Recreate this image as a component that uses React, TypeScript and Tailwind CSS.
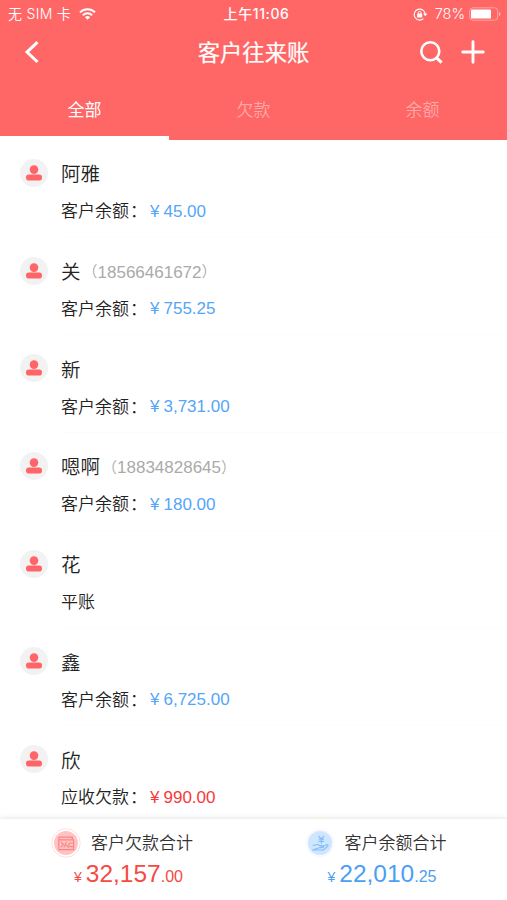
type Customer = {
	name: string;
	phone?: string;
	label: string;
	amount?: string;
	owed?: boolean;
};

const customers: Customer[] = [
	{ name: "阿雅", label: "客户余额", amount: "45.00" },
	{ name: "关", phone: "18566461672", label: "客户余额", amount: "755.25" },
	{ name: "新", label: "客户余额", amount: "3,731.00" },
	{ name: "嗯啊", phone: "18834828645", label: "客户余额", amount: "180.00" },
	{ name: "花", label: "平账" },
	{ name: "鑫", label: "客户余额", amount: "6,725.00" },
	{ name: "欣", label: "应收欠款", amount: "990.00", owed: true },
];

const tabs = ["全部", "欠款", "余额"];

function StatusBar() {
	return (
		<div className="grid h-7 grid-cols-3 items-center pr-1.5 pl-2 text-[14px] leading-5">
			<div className="flex items-center gap-2">
				<span className="whitespace-nowrap font-['Inter','Noto_Sans_CJK_SC',sans-serif] font-[350] tracking-[0.3px]">
					无 SIM 卡
				</span>
				<svg className="h-3 w-[17px]" fill="none" viewBox="0 0 17 12">
					<path d="M1 4.4a10.7 10.7 0 0 1 15 0" stroke="white" strokeWidth="2" />
					<path d="M3.8 7.2a6.7 6.7 0 0 1 9.4 0" stroke="white" strokeWidth="1.9" />
					<path d="M5.9 9.2a3.7 3.7 0 0 1 5.2 0L8.5 11.8Z" fill="white" />
				</svg>
			</div>
			<div className="whitespace-nowrap pl-1 text-center font-['Inter','Noto_Sans_CJK_SC',sans-serif] font-medium text-[14px] tracking-[0.6px]">
				上午11:06
			</div>
			<div className="flex items-center justify-end">
				<svg className="h-[13px] w-[15px]" fill="none" viewBox="0 0 15 13">
					<path
						d="M10.4 10.7A5.5 5.5 0 1 1 12.2 6"
						stroke="white"
						strokeWidth="1.1"
					/>
					<path d="M10.2 5.4h4.2l-2.1 2.8Z" fill="white" />
					<rect fill="white" height="3.8" rx=".5" width="5" x="4.2" y="5.6" />
					<path d="M5.3 6V4.8a1.4 1.4 0 0 1 2.8 0V6" stroke="white" strokeWidth=".9" />
				</svg>
				<span className="ml-[7px] font-['Inter',sans-serif] font-[350] text-[14.5px]">
					78%
				</span>
				<svg className="ml-1 h-[14px] w-8" fill="none" viewBox="0 0 32 14">
					<rect
						height="12.4"
						rx="3.2"
						stroke="white"
						strokeOpacity=".4"
						width="28"
						x=".7"
						y=".8"
					/>
					<rect fill="white" height="9.2" rx="1.2" width="20" x="2" y="2.4" />
					<path d="M30 4.8c2 .8 2 3.6 0 4.4Z" fill="white" fillOpacity=".5" />
				</svg>
			</div>
		</div>
	);
}

function Header() {
	return (
		<header className="h-[140px] bg-[#ff6666] text-white">
			<StatusBar />
			<div className="grid h-12 grid-cols-3 items-center">
				<svg className="ml-6 h-6 w-4" fill="none" viewBox="0 0 16 24">
					<path d="M13.5 2.2 3 12.1l10.5 9.9" stroke="white" strokeWidth="3" />
				</svg>
				<h1 className="whitespace-nowrap pt-[3px] text-center font-normal text-[22.3px] leading-8 [-webkit-text-stroke:0.2px_white]">
					客户往来账
				</h1>
				<div className="flex items-center justify-end gap-[18px] pr-[22px]">
					<svg className="h-6 w-6" fill="none" viewBox="0 0 24 24">
						<circle cx="11.3" cy="11.2" r="9" stroke="white" strokeWidth="2.6" />
						<path d="m17.4 17.6 5.2 5" stroke="white" strokeWidth="3" />
					</svg>
					<svg className="h-6 w-6" fill="none" viewBox="0 0 24 24">
						<path
							d="M12 1.8v20.4M1.8 12h20.4"
							stroke="white"
							strokeLinecap="round"
							strokeWidth="2.9"
						/>
					</svg>
				</div>
			</div>
			<nav className="grid h-16 grid-cols-3 text-[17px]">
				{tabs.map((tab, i) => (
					<div
						className={
							i === 0
								? "border-white border-b-4 pt-[23px] text-center leading-6"
								: "pt-[23px] text-center font-[350] text-white/45 leading-6"
						}
						key={tab}
					>
						{tab}
					</div>
				))}
			</nav>
		</header>
	);
}

function Avatar() {
	return (
		<svg className="h-7 w-7 shrink-0" viewBox="0 0 28 28">
			<circle cx="14" cy="14" fill="#f2f2f2" r="14" />
			<circle cx="14" cy="10.6" fill="#ff6468" r="4.3" />
			<rect fill="#ff6468" height="6" rx="2.8" width="16" x="6" y="15.6" />
		</svg>
	);
}

function CustomerRow({ name, phone, label, amount, owed }: Customer) {
	return (
		<li className="flex h-[97.7px] shrink-0 pl-5">
			<div className="pt-[19px]">
				<Avatar />
			</div>
			<div className="ml-[13px] flex-1 border-[#fcfcfc] border-b pt-5">
				<div className="flex h-[30px] items-center whitespace-nowrap">
					<span className="font-[350] text-[#222] text-[19.5px]">{name}</span>
					{phone && (
						<span className="flex items-center pl-0.5 font-[350] text-[#aaa] text-[17px]">
							<span className="text-[15px]">（</span>
							<span>{phone}</span>
							<span className="text-[15px]">）</span>
						</span>
					)}
				</div>
				<div className="mt-[6.5px] flex h-[30px] items-center whitespace-nowrap text-[17px]">
					<span className="pt-px font-[350] text-[#222]">
						{label}
						{amount && <span className="pl-px">：</span>}
					</span>
					{amount && (
						<span
							className={
								owed
									? "ml-[3px] flex gap-1 text-[#f8383c]"
									: "ml-[3px] flex gap-1 text-[#55a5f8]"
							}
						>
							<span>¥</span>
							<span>{amount}</span>
						</span>
					)}
				</div>
			</div>
		</li>
	);
}

function DebtIcon() {
	return (
		<svg className="h-[30px] w-[30px]" fill="none" viewBox="0 0 30 30">
			<circle cx="15" cy="15" r="14.2" stroke="#ffdada" strokeWidth=".9" />
			<circle cx="15" cy="15" fill="#ffc3c3" r="12" />
			<path
				d="M8 9.2h13.3v2.4M7.8 9v12.7h14.8v-9.9H7.8"
				stroke="#fb8585"
				strokeWidth="1.2"
			/>
			<path
				d="m9.8 14 2.6 2.4-2.6 3M15.6 13.8l-2.8 5.6M15 16.6l2.6 3.2M22.3 15h-3.3a1.9 1.9 0 0 0 0 3.6h3.3"
				stroke="#fb8585"
				strokeWidth="1.1"
			/>
		</svg>
	);
}

function BalanceIcon() {
	return (
		<svg className="h-[30px] w-[30px]" fill="none" viewBox="0 0 30 30">
			<circle cx="15" cy="15" fill="#f4faff" r="14" />
			<circle cx="15" cy="15" fill="#cfe6ff" r="12" />
			<path
				d="m13.6 8 2.7 2.8L19 8M16.3 10.8v4.8M13.6 11.2H19M13.6 13.4H19"
				stroke="#85bdf8"
				strokeWidth="1.2"
			/>
			<path
				d="M7.6 17.2h2.6c1.5-1.2 3-.8 4.3.4h2.7c1.7.2 1.5 2.1 0 2.1h-3.4m4.6-1.1 3-1.8c1.3-.6 2.1.7 1.1 1.6l-4.2 3.6H7.6Z"
				stroke="#85bdf8"
				strokeLinejoin="round"
				strokeWidth="1.1"
			/>
		</svg>
	);
}

function Footer() {
	return (
		<footer className="relative grid h-[81px] shrink-0 grid-cols-2 bg-white shadow-[0_-1px_5px_rgba(0,0,0,0.1)]">
			<div className="pt-2 pl-[51px]">
				<div className="flex h-8 items-center gap-2.5 font-[350] text-[#333] text-[17px]">
					<DebtIcon />
					<span className="pt-0.5">客户欠款合计</span>
				</div>
				<div className="-mt-px ml-[23px] flex h-8 items-baseline text-[#f64a44] leading-8">
					<span className="text-[14px]">¥</span>
					<span className="ml-1 text-[24.5px]">32,157</span>
					<span className="text-[16px]">.00</span>
				</div>
			</div>
			<div className="pt-2 pl-[51px]">
				<div className="flex h-8 items-center gap-2.5 font-[350] text-[#333] text-[17px]">
					<BalanceIcon />
					<span className="pt-0.5">客户余额合计</span>
				</div>
				<div className="-mt-px ml-[23px] flex h-8 items-baseline text-[#4a9ff5] leading-8">
					<span className="text-[14px]">¥</span>
					<span className="ml-1 text-[24.5px]">22,010</span>
					<span className="text-[16px]">.25</span>
				</div>
			</div>
		</footer>
	);
}

export default function App() {
	return (
		<main className="flex h-[900px] w-[507px] flex-col overflow-hidden bg-white font-['Liberation_Sans','Noto_Sans_CJK_SC',sans-serif]">
			<Header />
			<ul className="min-h-0 flex-1 overflow-hidden">
				{customers.map((customer) => (
					<CustomerRow key={customer.name} {...customer} />
				))}
			</ul>
			<Footer />
		</main>
	);
}
